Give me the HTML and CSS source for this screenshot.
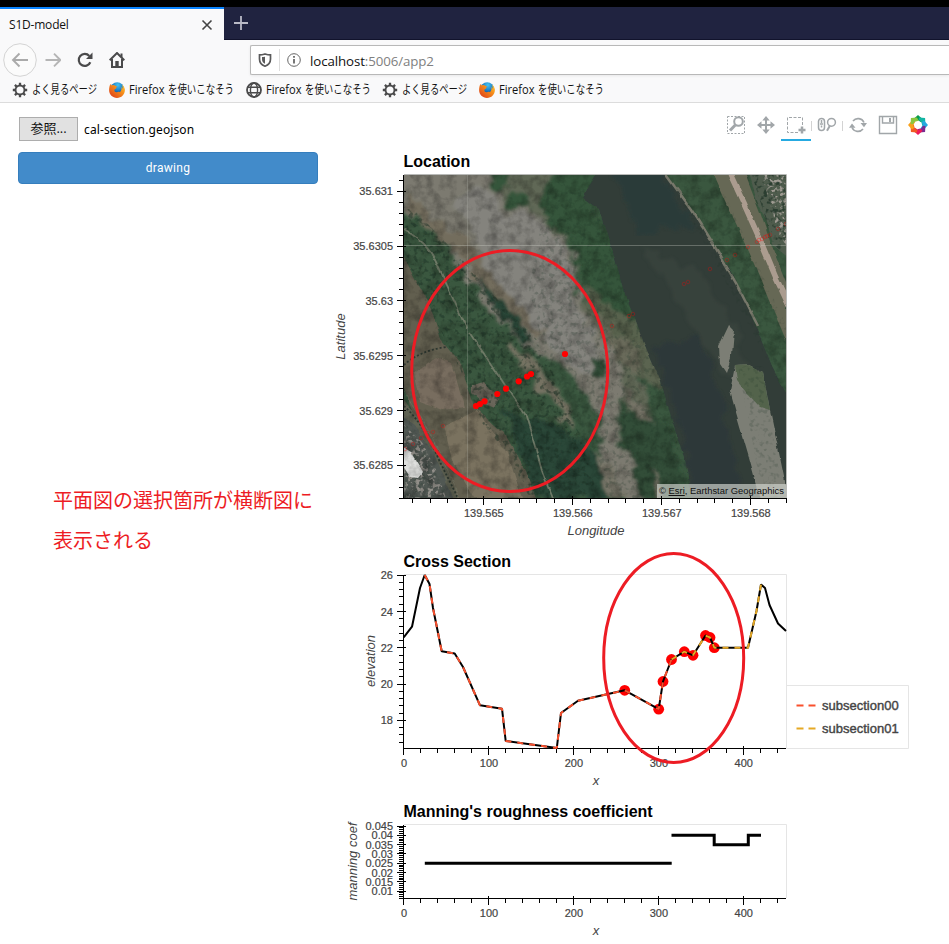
FILE: index.html
```html
<!DOCTYPE html>
<html lang="ja">
<head>
<meta charset="utf-8">
<title>S1D-model</title>
<link rel="stylesheet" href="styles.css">
</head>
<body>
<svg class="defs" width="0" height="0" aria-hidden="true">
  <defs>
    <radialGradient id="globeBlue" cx=".55" cy=".2" r=".7"><stop offset="0" stop-color="#45c4f4"/><stop offset=".6" stop-color="#1a78c2"/><stop offset="1" stop-color="#173a78"/></radialGradient>
    <linearGradient id="foxFire" x1="1" y1="0" x2="0" y2="1"><stop offset="0" stop-color="#ffd23a"/><stop offset=".35" stop-color="#f7941b"/><stop offset="1" stop-color="#d9341a"/></linearGradient>
    <symbol id="gear" viewBox="0 0 16 16">
      <circle cx="8" cy="8" r="4.5" fill="none" stroke="#4a4a4b" stroke-width="1.9"/>
      <path d="M8 .8v3M8 12.2v3M.8 8h3M12.2 8h3M2.9 2.9 5 5M11 11l2.1 2.1M13.1 2.9 11 5M5 11l-2.1 2.1" stroke="#4a4a4b" stroke-width="2.3"/>
    </symbol>
    <symbol id="globe" viewBox="0 0 16 16">
      <g fill="none" stroke="#4a4a4b" stroke-width="1.4"><circle cx="8" cy="8" r="7" stroke-width="1.8"/><ellipse cx="8" cy="8" rx="3.6" ry="7"/><path d="M1.8 5.3h12.4M1.8 10.7h12.4"/></g>
    </symbol>
    <symbol id="firefox" viewBox="0 0 16 16">
      <circle cx="8.2" cy="7.2" r="6.9" fill="url(#globeBlue)"/>
      <path d="M1.4 1.9 2.6 3.5C3.8 2.8 5.4 3 6.3 3.7L8.4 4.7C7.3 5.1 7 5.7 7.2 6.6L5.5 7.5C5 9.1 6 10.3 7.8 10.2 9.3 9.6 10.4 9.5 10.8 10.2 12.2 9.3 12.8 7.4 12.4 5.1 13.2 5.9 13.4 6.5 13.5 7.1 14 5.4 13.5 3.6 12.5 2.3 14.6 3.7 15.9 5.8 15.9 8.2 15.8 12.6 12.4 15.9 8 15.9 3.6 15.9.1 12.4.1 8.2.1 5.5.6 3.5 1.4 1.9Z" fill="url(#foxFire)"/>
    </symbol>
  </defs>
</svg>

<header class="browser">
  <div class="tabbar">
    <div class="tab">
      <span class="tab-title">S1D-model</span>
      <svg class="close" viewBox="0 0 12 12"><path d="m1.5 1.5 9 9m0-9-9 9" stroke="#444" stroke-width="1.6"/></svg>
    </div>
    <svg class="newtab" viewBox="0 0 16 16"><path d="M8 1v14M1 8h14" stroke="#b9bac6" stroke-width="1.8"/></svg>
  </div>
  <div class="navbar">
    <div class="navbuttons">
      <svg class="back" viewBox="0 0 34 34"><circle cx="17" cy="17" r="16.3" fill="#fbfbfb" stroke="#d3d3d3"/><path d="M25 17H10m6.500-6.500L10 17l6.500 6.500" fill="none" stroke="#aaa" stroke-width="1.9"/></svg>
      <svg class="nav-icon" viewBox="0 0 16 16"><path d="M.5 8H15M9 1.700 15.300 8 9 14.300" fill="none" stroke="#b5b5b5" stroke-width="1.9"/></svg>
      <svg class="nav-icon" viewBox="0 0 16 16"><path d="M13.300 10.300A6 6 0 1 1 12.300 4" fill="none" stroke="#4a4a4b" stroke-width="2.200"/><path d="M15.500.6V7H9Z" fill="#4a4a4b"/></svg>
      <svg class="nav-icon" viewBox="0 0 16 16"><path d="M.7 8.300 8 1l7.300 7.300" fill="none" stroke="#4a4a4b" stroke-width="2"/><path d="M3 7v8h10V7" fill="none" stroke="#4a4a4b" stroke-width="2"/><path d="M6.300 15V9h3.400v6M11.500 1.500h2V6l-2-2z" fill="#4a4a4b"/></svg>
    </div>
    <div class="urlbar">
      <svg class="shield" viewBox="0 0 14 14"><path d="M7 1C5 1.600 3 1.900 1.500 1.900V6c0 4 2 6 5.500 7.200C10.500 12 12.500 10 12.500 6V1.900C11 1.900 9 1.600 7 1Z" fill="none" stroke="#5a5a5b" stroke-width="1.700"/><path d="M7 3.700c-1 .3-2 .4-3 .4V6c0 2.500 1 3.900 3 4.800Z" fill="#5a5a5b"/></svg>
      <span class="divider"></span>
      <svg class="info" viewBox="0 0 14 14"><circle cx="7" cy="7" r="6.300" fill="none" stroke="#666"/><path d="M7 6v4.500M7 3v1.700" stroke="#555" stroke-width="1.600"/></svg>
      <span class="url"><b>localhost</b>:5006/app2</span>
    </div>
  </div>
  <nav class="bookmarks">
    <a class="bm short"><svg class="bm-icon"><use href="#gear"/></svg><svg class="bm-text"><text x="0" y="14" textLength="65" lengthAdjust="spacingAndGlyphs">よく見るページ</text></svg></a>
    <a class="bm"><svg class="bm-icon"><use href="#firefox"/></svg><svg class="bm-text"><text x="0" y="14" textLength="35.500" lengthAdjust="spacingAndGlyphs">Firefox</text><text x="39" y="14" textLength="66" lengthAdjust="spacingAndGlyphs">を使いこなそう</text></svg></a>
    <a class="bm"><svg class="bm-icon"><use href="#globe"/></svg><svg class="bm-text"><text x="0" y="14" textLength="35.500" lengthAdjust="spacingAndGlyphs">Firefox</text><text x="39" y="14" textLength="66" lengthAdjust="spacingAndGlyphs">を使いこなそう</text></svg></a>
    <a class="bm short"><svg class="bm-icon"><use href="#gear"/></svg><svg class="bm-text"><text x="0" y="14" textLength="65" lengthAdjust="spacingAndGlyphs">よく見るページ</text></svg></a>
    <a class="bm"><svg class="bm-icon"><use href="#firefox"/></svg><svg class="bm-text"><text x="0" y="14" textLength="35.500" lengthAdjust="spacingAndGlyphs">Firefox</text><text x="39" y="14" textLength="66" lengthAdjust="spacingAndGlyphs">を使いこなそう</text></svg></a>
  </nav>
</header>

<main class="page">
  <section class="controls">
    <div class="file"><span class="browse">参照...</span><span class="filename">cal-section.geojson</span></div>
    <div class="draw">drawing</div>
    <p class="note">平面図の選択箇所が横断図に<br>表示される</p>
  </section>

  <section class="plots">
    <div class="toolbar">
      <span class="tool"><svg viewBox="0 0 20 20"><path d="M1.500 1.500h17v17h-17z" fill="none" stroke="#a1a6a9" stroke-dasharray="2 1.500"/><circle cx="12.500" cy="6.500" r="4.300" fill="#fff" stroke="#a1a6a9" stroke-width="2"/><path d="M9.300 10 4 15.500" stroke="#a1a6a9" stroke-width="3"/></svg></span>
      <span class="tool"><svg viewBox="0 0 20 20"><path d="M10 3v14M3 10h14" stroke="#a1a6a9" stroke-width="2"/><path d="m10 1 3.700 4.500H6.300zM10 19l3.700-4.500H6.300zM1 10l4.500-3.700v7.400zM19 10l-4.500-3.700v7.400z" fill="#a1a6a9"/></svg></span>
      <span class="tool active"><svg viewBox="0 0 20 20"><path d="M12 17.500H1.500v-15h15V11" fill="none" stroke="#a1a6a9" stroke-dasharray="3 1.500"/><path d="M16 11.500v7M12.500 15h7" stroke="#a1a6a9" stroke-width="2.500"/></svg></span>
      <span class="sep"></span>
      <span class="tool"><svg viewBox="0 0 20 20"><g fill="none" stroke="#a1a6a9" stroke-width="1.500"><rect x="1.500" y="3.500" width="6" height="12" rx="3"/><path d="M4.500 5v3M3 9h3M4.500 10.500v2"/><circle cx="14.500" cy="7.300" r="3.900"/><path d="m13 10.500-3 5.200" stroke-width="2"/></g></svg></span>
      <span class="sep"></span>
      <span class="tool"><svg viewBox="0 0 20 20"><path d="M5 6a6.500 6.500 0 0 1 11 1.500M15 14a6.500 6.500 0 0 1-11-1.500" fill="none" stroke="#a1a6a9" stroke-width="1.600"/><path d="M1 12.800 4 8.500l3.500 4.300zM19 8l-3 4.300L12.500 8z" fill="#a1a6a9"/></svg></span>
      <span class="tool"><svg viewBox="0 0 20 20"><path d="M1.500 1.500h17v17h-17z" fill="none" stroke="#a1a6a9" stroke-width="1.400"/><path d="M4.500 2v6h11V2" fill="none" stroke="#a1a6a9" stroke-width="1.400"/><path d="M12 3v4" stroke="#a1a6a9" stroke-width="2"/></svg></span>
      <span class="tool logo"><svg viewBox="0 0 20 20"><g id="petals"></g></svg></span>
    </div>

    <svg class="fig map" viewBox="330 145 619 400">
      <defs>
        <clipPath id="mapClip"><path d="M404 175h382v323H404z"/></clipPath>
        <filter id="ragged" x="-5%" y="-5%" width="110%" height="110%"><feTurbulence type="fractalNoise" baseFrequency=".07" numOctaves="4" seed="4"/><feDisplacementMap in="SourceGraphic" scale="20" xChannelSelector="R" yChannelSelector="G"/><feGaussianBlur stdDeviation="1.8"/></filter>
        <filter id="soft" x="-10%" y="-10%" width="120%" height="120%"><feTurbulence type="fractalNoise" baseFrequency=".06" numOctaves="3" seed="8"/><feDisplacementMap in="SourceGraphic" scale="5" xChannelSelector="R" yChannelSelector="G"/><feGaussianBlur stdDeviation=".7"/></filter>
        <filter id="grain" x="0" y="0" width="100%" height="100%"><feTurbulence type="fractalNoise" baseFrequency=".09" numOctaves="4" seed="12"/><feColorMatrix values="0 0 0 0 0  0 0 0 0 0  0 0 0 0 0  2 0 0 0 -.8"/></filter>
        <filter id="clumps" x="0" y="0" width="100%" height="100%"><feTurbulence type="fractalNoise" baseFrequency=".22" numOctaves="2" seed="21" result="n"/><feColorMatrix in="n" values="0 0 0 0 .012  0 0 0 0 .03  0 0 0 0 .018  0 5 0 0 -2.600" result="d"/><feComposite in="d" in2="SourceAlpha" operator="in"/></filter>
        <filter id="rubble" x="0" y="0" width="100%" height="100%"><feTurbulence type="fractalNoise" baseFrequency=".25" numOctaves="2" seed="5" result="n"/><feColorMatrix in="n" values="0 0 0 0 .42  0 0 0 0 .38  0 0 0 0 .35  0 6 0 0 -3" result="d"/><feComposite in="d" in2="SourceAlpha" operator="in"/></filter>
      </defs>
      <text class="title" x="403.500" y="167">Location</text>
      <g clip-path="url(#mapClip)">
        <path fill="#3a573f" d="M404 175h382v323H404z"/>
        <g filter="url(#ragged)">
          <path fill="#606857" d="M480 165h85l-10 20-12 20 15 20 15 40 8 35 50 40 15 50 10 40-20-10-30-30-60-60z"/>
          <path fill="#7c7a70" d="M395 165h87l14 22 14 14 30 16 20 20 16 28 4 34 12 24 22 24 8 32-4 28-1 32 24 30 4 34h-20l-24-48-2-38-24-38-30-22-26-16-30-32-20-30-20-30-20-18-29-24z"/>
          <path fill="#84837d" d="M480 185l28 28 30 2 22 26 15 30 2 35 12 22 10 25-8 22-27-15-25-32-30-28-20-24-20-55-20-20z"/>
          <path fill="#736d5d" d="M404 192l28 24 22 12 20 22 18 28 32 30 18 25-5 5-30-22-22-24-20-32-30-22-31-30z"/>
          <path fill="#36543a" d="M484 170h25l-2 18-12 5zM511 195l15 1 6 12-8 3-14-5zM541 200l14-30h45l-5 40 18 45 28 62 12 24-12 5-28-15-18-20-12-24-14-48-20-15z"/>
          <path fill="#706d5c" d="M580 282l15 12 30 20 24 25 20 46-8 5-40-28-20-20z" opacity=".6"/>
          <path fill="#304e38" d="M594 356l14 12-4 10-12-4zM618 410l50 12 8 30 14 46h-50l-8-40-13-20z"/>
          <path fill="#777568" d="M625 388l22 22 8 18-18-10-14-20zM590 450l20 14 18 34h-20l-12-18-14-16zM653 468l8 18 8 16-12-5-6-15z"/>
          <path fill="#747262" d="M514 345l16 10 18 22 14 22 15 32-10-8-22-30-22-28-12-16z"/>
          <path fill="#2c4737" d="M480 280l18 18 22 24 12 20-12-2-24-30-18-25zM500 410l55 12 40 30 12 46h-70l-18-50z"/>
        </g>
        <path filter="url(#soft)" fill="#625e4f" d="M400 250l17 33 14 25 10 32 18 22 16 45 30 27 20 36 14 36h-76l-28-52-20-38-15-40z"/>
        <g filter="url(#soft)">
          <path fill="#786d5e" d="M413 373l24-16 14 6 14 44-22 3-23-9z"/>
          <path fill="#7a725f" d="M444 426l34-16 15 22 14 20 15 46h-48l-22-38z"/>
          <path fill="#6b665a" d="M472 385l12-3 15 17-4 8-13-5-10-9z"/>
          <path fill="#606453" d="M400 395l20 25 25 48 16 36h-61z"/>
          <path fill="#515953" d="M398 414l16 11 20 28 20 48h-56z"/>
        </g>
        <path filter="url(#rubble)" opacity=".7" d="M404 425l18 17 15 30 9 26h-42z"/>
        <path filter="url(#clumps)" opacity=".5" d="M404 200l25 25 38 40 40 45 30 30 38 80 25 83h-68l-25-49-28-35-18-48-22-44-35-67z"/>
        <path filter="url(#clumps)" opacity=".22" d="M550 180l42 10 30 80 32 65 35 163h-80l-50-80-30-130zM404 410l45 88h-45z"/>
        <path fill="#dfe0de" filter="url(#soft)" d="M403 447l8 5 12 20-5 6-7-1-10-16z"/>
        <path class="trail dark" d="M404 406q20 18 35 54l24 48M404 365q15-14 42-18"/>
        <path class="trail" filter="url(#soft)" d="M404 230q23 14 30 28t10 22l23 48M470 333l35 52 20 28 9 30 8 28 12 30"/>
        <path class="trail thin" filter="url(#soft)" d="M404 390l27 45 30 65"/>
        <path filter="url(#grain)" opacity=".3" d="M404 175h382v323H404z"/>
        <path filter="url(#soft)" fill="#313c39" d="M600 170h62l22 30 28 42 20 30 22 50 18 45 25 48v95H693l-7-47-14-42-11-39-18-41-16-42-12-40-16-50-16-11z"/>
        <path filter="url(#ragged)" fill="#29363a" d="M655 345l20 65 24 92h40l-15-95-25-70z" opacity=".6"/>
        <path filter="url(#ragged)" fill="#263b3a" d="M612 165h45l40 62-60 5z" opacity=".6"/>
        <path filter="url(#ragged)" fill="#3c4641" d="M642 250l55 20 40 60 10 60-25-20-45-70z" opacity=".5"/>
        <path filter="url(#soft)" fill="#7b7e74" d="M729 325l5 5-2 25-6 18-6-9-1-18zM735 366l14-1 14 7 7 38 7 33 12 58h-28l-12-44-14-48-5-18z"/>
        <path filter="url(#soft)" fill="#53634c" d="M735 366l14-1 14 7 7 38-10-3-15-16-8-10z"/>
        <path filter="url(#soft)" fill="none" stroke="#77776a" stroke-width="2.500" d="M664 172l28 38 26 42 18 31 22 43"/>
        <path filter="url(#soft)" fill="#666754" d="M712 170h32l16 42 12 35 14 35v58l-18-42-18-44-23-50z"/>
        <path filter="url(#soft)" fill="none" stroke="#ab9c8f" stroke-width="5.500" d="M726 165l18 39 17 38 15 36 16 34"/>
        <path fill="#4f5b4e" filter="url(#soft)" d="M748 170h45v92l-19-15-8-27-9-20z"/>
        <path filter="url(#rubble)" opacity=".85" d="M762 175h24v70l-8-12-7-26z"/>
        <path filter="url(#clumps)" opacity=".7" d="M752 175h34v80l-12-10z"/>
        <path filter="url(#clumps)" opacity=".18" d="M670 180l55 15 61 130v70l-40-75zM738 366h25l20 132h-20z"/>
        <path d="M467.500 175v323" stroke="#bec0b7" opacity=".25"/><path d="M404 245.500h382" stroke="#d5d7ce" opacity=".32"/>
        <g id="faint"></g><g id="picked"></g>
        <path fill="#d5d8d3" opacity=".65" d="M657 484h129v14H657z"/>
      </g>
      <text class="credit" x="659" y="494" textLength="125" lengthAdjust="spacingAndGlyphs">© <tspan class="link">Esri</tspan>, Earthstar Geographics</text>
      <path d="M404 174.500h382.500V498" fill="none" stroke="#b9bab8"/>
      <g id="axes1"></g>
      <text class="axis-title" x="596" y="535">Longitude</text>
      <text class="axis-title" transform="translate(345 336.500) rotate(-90)">Latitude</text>
      <ellipse class="mark" cx="509.700" cy="371" rx="98" ry="120.500"/>
    </svg>

    <svg class="fig section" viewBox="330 545 619 250">
      <text class="title" x="403.500" y="567">Cross Section</text>
      <path class="frame" d="M404 574.500h382.500V748"/>
      <g id="picked2"></g>
      <g id="axes2"></g>
      <polyline class="ground" points="403.700,637.300 412,626.700 420,588 424.700,575 429.500,584 433,608 441.700,651.300 454.700,653.500 463,667 480,705.300 502,708.700 505.700,741 556.800,748 561,713 578,700.800 624.700,690.300 658.700,709.200 663,681.500 671.500,659.500 684.300,651.700 693,655.300 705.500,635.500 710,637.500 714.300,647.700 748,647.700 756.500,611 761,584.500 765,588 769.500,605 778,623.500 786,631"/>
      <polyline class="ground sub0" points="424.700,575 429.500,584 433,608 441.700,651.300 454.700,653.500 463,667 480,705.300 502,708.700 505.700,741 556.800,748 561,713 578,700.800 624.700,690.300 658.700,709.200 663,681.500 671.500,659.500"/>
      <polyline class="ground sub1" points="671.500,659.500 684.300,651.700 693,655.300 705.500,635.500 710,637.500 714.300,647.700 748,647.700 756.500,611 761,584.500"/>
      <path class="frame" d="M786.500 685.500h122v63h-122z"/>
      <path class="ground sub0" d="M796.500 705.500h19"/><path class="ground sub1" d="M796.500 728.500h19"/>
      <text class="legend" x="822" y="710">subsection00</text><text class="legend" x="822" y="733">subsection01</text>
      <text class="axis-title" x="596" y="785">x</text>
      <text class="axis-title" transform="translate(375 661) rotate(-90)">elevation</text>
      <ellipse class="mark" cx="673.700" cy="658" rx="70" ry="104.500"/>
    </svg>

    <svg class="fig manning" viewBox="330 795 619 149">
      <text class="title" x="403.500" y="817">Manning's roughness coefficient</text>
      <path class="frame" d="M404 824.500h382.500V898"/>
      <g id="axes3"></g>
      <path class="coef" d="M424.800 863.200h246.900M671.500 835.300h42.700v9.500H748.300v-9.500h12.700"/>
      <text class="axis-title" x="596" y="935">x</text>
      <text class="axis-title" transform="translate(357 861.500) rotate(-90)">manning coef</text>
    </svg>
  </section>
</main>
<script src="plots.js"></script>
</body>
</html>
```
FILE: styles.css
```css
* { box-sizing: border-box; }
body { margin: 0; width: 949px; height: 944px; overflow: hidden; background: #fff; font-family: "Open Sans", "Noto Sans CJK JP", sans-serif; font-size: 12px; color: #111; }
svg { display: block; flex: none; }
.defs { position: absolute; }

.browser { height: 103px; border-top: 7px solid #000; border-bottom: 1px solid #dcdcdc; background: #f9f9fa; }
.tabbar { display: flex; align-items: center; height: 33px; background: #202340; border-bottom: 1px solid #11132c; }
.tab { display: flex; align-items: center; justify-content: space-between; width: 224px; height: 33px; margin-bottom: -1px; padding: 0 11px 0 9px; border-top: 2px solid #0a84ff; background: #f9f9fa; }
.tab-title { letter-spacing: -.2px; }
.close { width: 12px; height: 12px; }
.newtab { width: 16px; height: 16px; margin-left: 9px; }
.navbar { display: flex; align-items: center; height: 40px; padding-left: 3px; }
.navbuttons { display: flex; align-items: center; gap: 16px; width: 247px; }
.back { width: 34px; height: 34px; margin-right: -8px; }
.nav-icon { width: 16px; height: 16px; }
.urlbar { display: flex; align-items: center; flex: 1; height: 30px; padding-left: 7px; border: 1px solid #b8b8b8; border-right: 0; border-radius: 2px 0 0 2px; background: #fff; box-shadow: 0 1px 3px #0001; }
.shield { width: 14px; height: 14px; }
.divider { width: 1px; height: 22px; margin: 0 7px; background: #ddd; }
.info { width: 14px; height: 14px; }
.url { margin-left: 9px; padding-top: 1px; font-size: 13.3px; letter-spacing: -.1px; color: #808080; }
.url b { font-weight: 400; color: #111; }
.bookmarks { display: flex; align-items: center; gap: 12px; height: 20px; padding-left: 12px; }
.bm { display: flex; align-items: center; gap: 4px; width: 124.500px; height: 20px; }
.bm.short { width: 85px; }
.bm-icon { width: 16px; height: 16px; }
.bm-text { width: 106px; height: 20px; overflow: visible; font-size: 12px; fill: #111; }

.page { display: grid; grid-template-columns: 330px 619px; height: 841px; }
.controls { padding: 14px 12px 0 18px; }
.file { display: flex; align-items: center; height: 24px; margin-left: 1px; }
.browse { width: 59px; height: 24px; border: 1px solid #adadad; background: #e1e1e1; line-height: 21px; text-align: center; font-size: 13px; }
.filename { margin-left: 6px; font-family: "Noto Sans", sans-serif; font-size: 12px; letter-spacing: .12px; color: #000; }
.draw { height: 32px; margin-top: 11px; border: 1px solid #357ebd; border-radius: 4px; background: #428bca; color: #fff; font: 12px/30px Roboto, sans-serif; letter-spacing: .3px; text-align: center; }
.note { margin: 296px 0 0 35px; font: 400 20px/40px "Noto Sans CJK JP", sans-serif; color: #ed1c24; white-space: nowrap; }

.toolbar { display: flex; height: 42px; padding: 7px 16px 0 0; justify-content: flex-end; }
.tool { display: flex; align-items: center; justify-content: center; width: 30px; height: 31px; padding-top: 1px; border-bottom: 2px solid transparent; }
.tool.active { border-bottom-color: #26aae1; }
.tool svg { width: 20px; height: 20px; }
.sep { width: 1px; height: 10px; margin-top: 11px; background: #d3d3d3; }
.fig { width: 619px; overflow: hidden; }
.map { height: 400px; }
.section { height: 250px; }
.manning { height: 149px; }
.fig text { font-family: "Liberation Sans", sans-serif; }
.title { font-size: 16px; font-weight: 700; fill: #000; }
.tick-label { font-size: 11px; fill: #444; stroke: #444; stroke-width: .2px; }
.axis-title { font-size: 13px; font-style: italic; text-anchor: middle; fill: #444; }
.legend { font-size: 13px; fill: #444; stroke: #444; stroke-width: .4px; }
.credit { font-size: 9.700px; fill: #111; }
.link { text-decoration: underline; }
.axis { fill: none; stroke: #000; shape-rendering: crispEdges; }
.frame { fill: none; stroke: #e5e5e5; }
.ground { fill: none; stroke: #000; stroke-width: 2; stroke-linejoin: bevel; }
.ground.sub0 { stroke: #f9502d; stroke-dasharray: 6; }
.ground.sub1 { stroke: #e6a925; stroke-dasharray: 6; }
path.ground.ground { stroke-dasharray: 7 5; }
.coef { fill: none; stroke: #000; stroke-width: 3; }
.mark { fill: none; stroke: #ed1c24; stroke-width: 3; }
.dot { fill: red; }
.ring { fill: none; stroke: red; opacity: .3; }
.trail { fill: none; stroke: #7e8572; stroke-width: 1.800; opacity: .8; }
.trail.thin { stroke-width: 1; opacity: .4; }
.trail.dark { stroke: #222e29; stroke-dasharray: 2 2; }
```
FILE: plots.js
```js
const NS = "http://www.w3.org/2000/svg";
function add(parentId, tag, attrs, text) {
  const el = document.createElementNS(NS, tag);
  for (const key in attrs) el.setAttribute(key, attrs[key]);
  if (text !== undefined) el.textContent = text;
  document.getElementById(parentId).appendChild(el);
}
const snap = v => Math.floor(v) + 0.5;

// Draws both axes of a plot: major ticks with labels and the minor ticks between them.
function drawAxes(id, top, bottom, x, y) {
  let d = `M403.500 ${top}V${bottom + 0.5}M403 ${bottom + 0.5}H786`;
  for (let p = x.at - x.minor * 5; p < 787; p += x.minor) {
    if (p > 403) d += `M${snap(p)} ${bottom}v5`;
  }
  for (let p = y.at - y.minor * 5; p < bottom + 1.2; p += y.minor) {
    if (p >= top - 0.5) d += `M399 ${snap(p)}h5`;
  }
  x.labels.forEach((label, i) => {
    const p = x.at + i * x.minor * 5;
    d += `M${snap(p)} ${bottom - 2}v9`;
    add(id, "text", { class: "tick-label", x: p + 0.3, y: bottom + 19, "text-anchor": "middle" }, label);
  });
  y.labels.forEach((label, i) => {
    const p = y.at + i * y.minor * 5;
    d += `M397 ${snap(p)}h9`;
    add(id, "text", { class: "tick-label", x: 393, y: p + 4, "text-anchor": "end" }, label);
  });
  add(id, "path", { class: "axis", d });
}
const distance = { at: 403.7, minor: 16.99, labels: ["0", "100", "200", "300", "400"] };
drawAxes("axes1", 175, 498,
  { at: 483.5, minor: 17.8, labels: ["139.565", "139.566", "139.567", "139.568"] },
  { at: 191.3, minor: 10.96, labels: ["35.631", "35.6305", "35.63", "35.6295", "35.629", "35.6285"] });
drawAxes("axes2", 575, 748, distance, { at: 575.2, minor: 7.26, labels: ["26", "24", "22", "20", "18"] });
drawAxes("axes3", 825, 898, distance,
  { at: 826.1, minor: 1.856, labels: ["0.045", "0.04", "0.035", "0.03", "0.025", "0.02", "0.015", "0.01"] });

[[476, 406], [480, 404], [484.5, 401.3], [497.3, 394], [506, 388.7], [518.7, 381.3], [527, 376.5], [531, 374], [565, 354]]
  .forEach(([cx, cy]) => add("picked", "circle", { class: "dot", cx, cy, r: 3.1 }));
[[405, 449], [413, 444], [421, 438], [428, 433], [433, 432], [443, 426], [612, 326], [629, 316], [633, 314], [684, 284],
  [688, 282], [710, 269], [727, 260], [735, 255], [748, 247], [757, 242], [759, 240], [762, 239], [765, 237], [767, 236], [770, 235], [778, 229], [786, 224]]
  .forEach(([cx, cy]) => add("faint", "circle", { class: "ring", cx, cy, r: 1.8 }));
[[624.7, 690.3], [658.7, 709.2], [663, 681.5], [671.5, 659.5], [684.3, 651.7], [693, 655.3], [705.5, 635.5], [710, 637.5], [714.3, 647.7]]
  .forEach(([cx, cy]) => add("picked2", "circle", { class: "dot", cx, cy, r: 5.4 }));

["#0a9b4b", "#12b5a5", "#25a9e0", "#7b2a90", "#ed1b5a", "#f15a24", "#f9a11b", "#8cc63f"].forEach((fill, i) =>
  add("petals", "path", { fill, d: "M5.500 4 10 0l4.500 4-1 3.500L10 5.300 7 6z", transform: `rotate(${i * 45} 10 10)` }));
```
